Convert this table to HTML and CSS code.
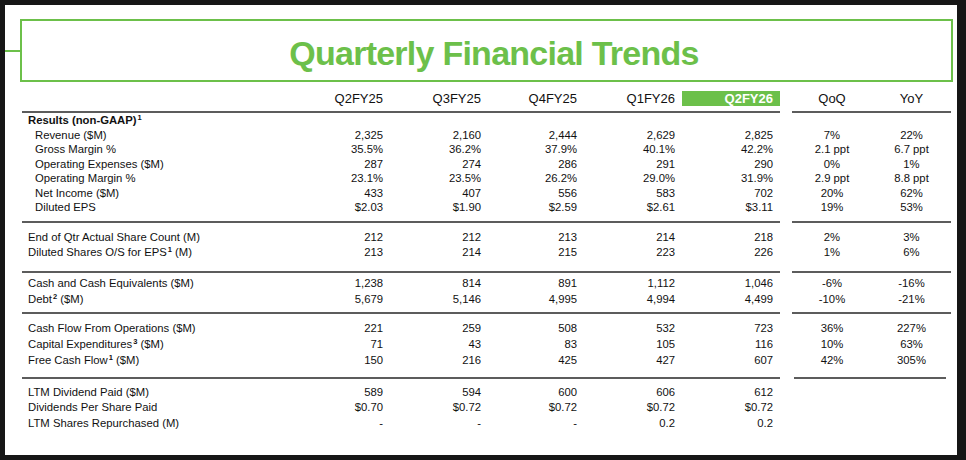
FILE: index.html
```html
<!DOCTYPE html>
<html>
<head>
<meta charset="utf-8">
<link rel="stylesheet" href="styles.css">
</head>
<body>
<div class="panel">
  <div class="title-row">
    <div class="connector"></div>
    <div class="title-box"><h1 class="title">Quarterly Financial Trends</h1></div>
  </div>

  <div class="row head">
    <span></span>
    <span class="num">Q2FY25</span>
    <span class="num">Q3FY25</span>
    <span class="num">Q4FY25</span>
    <span class="num">Q1FY26</span>
    <span class="num hl">Q2FY26</span>
    <span class="chg">QoQ</span>
    <span class="chg">YoY</span>
  </div>
  <div class="rule r-head"><div class="rl"></div><div class="rr"></div></div>

  <div class="sec s1">
    <div class="row"><span class="lbl bold">Results (non-GAAP)<sup>1</sup></span><span></span><span></span><span></span><span></span><span></span><span></span><span></span></div>
    <div class="row"><span class="lbl sub">Revenue ($M)</span><span class="num">2,325</span><span class="num">2,160</span><span class="num">2,444</span><span class="num">2,629</span><span class="num">2,825</span><span class="chg">7%</span><span class="chg">22%</span></div>
    <div class="row"><span class="lbl sub">Gross Margin %</span><span class="num">35.5%</span><span class="num">36.2%</span><span class="num">37.9%</span><span class="num">40.1%</span><span class="num">42.2%</span><span class="chg">2.1 ppt</span><span class="chg">6.7 ppt</span></div>
    <div class="row"><span class="lbl sub">Operating Expenses ($M)</span><span class="num">287</span><span class="num">274</span><span class="num">286</span><span class="num">291</span><span class="num">290</span><span class="chg">0%</span><span class="chg">1%</span></div>
    <div class="row"><span class="lbl sub">Operating Margin %</span><span class="num">23.1%</span><span class="num">23.5%</span><span class="num">26.2%</span><span class="num">29.0%</span><span class="num">31.9%</span><span class="chg">2.9 ppt</span><span class="chg">8.8 ppt</span></div>
    <div class="row"><span class="lbl sub">Net Income ($M)</span><span class="num">433</span><span class="num">407</span><span class="num">556</span><span class="num">583</span><span class="num">702</span><span class="chg">20%</span><span class="chg">62%</span></div>
    <div class="row"><span class="lbl sub">Diluted EPS</span><span class="num">$2.03</span><span class="num">$1.90</span><span class="num">$2.59</span><span class="num">$2.61</span><span class="num">$3.11</span><span class="chg">19%</span><span class="chg">53%</span></div>
  </div>
  <div class="rule r1"><div class="rl"></div><div class="rr"></div></div>

  <div class="sec s2">
    <div class="row"><span class="lbl">End of Qtr Actual Share Count (M)</span><span class="num">212</span><span class="num">212</span><span class="num">213</span><span class="num">214</span><span class="num">218</span><span class="chg">2%</span><span class="chg">3%</span></div>
    <div class="row"><span class="lbl">Diluted Shares O/S for EPS<sup>1</sup> (M)</span><span class="num">213</span><span class="num">214</span><span class="num">215</span><span class="num">223</span><span class="num">226</span><span class="chg">1%</span><span class="chg">6%</span></div>
  </div>
  <div class="rule r2"><div class="rl"></div><div class="rr"></div></div>

  <div class="sec s3">
    <div class="row"><span class="lbl">Cash and Cash Equivalents ($M)</span><span class="num">1,238</span><span class="num">814</span><span class="num">891</span><span class="num">1,112</span><span class="num">1,046</span><span class="chg">-6%</span><span class="chg">-16%</span></div>
    <div class="row"><span class="lbl">Debt<sup>2</sup> ($M)</span><span class="num">5,679</span><span class="num">5,146</span><span class="num">4,995</span><span class="num">4,994</span><span class="num">4,499</span><span class="chg">-10%</span><span class="chg">-21%</span></div>
  </div>
  <div class="rule r3"><div class="rl"></div><div class="rr"></div></div>

  <div class="sec s4">
    <div class="row"><span class="lbl">Cash Flow From Operations ($M)</span><span class="num">221</span><span class="num">259</span><span class="num">508</span><span class="num">532</span><span class="num">723</span><span class="chg">36%</span><span class="chg">227%</span></div>
    <div class="row"><span class="lbl">Capital Expenditures<sup>3</sup> ($M)</span><span class="num">71</span><span class="num">43</span><span class="num">83</span><span class="num">105</span><span class="num">116</span><span class="chg">10%</span><span class="chg">63%</span></div>
    <div class="row"><span class="lbl">Free Cash Flow<sup>1</sup> ($M)</span><span class="num">150</span><span class="num">216</span><span class="num">425</span><span class="num">427</span><span class="num">607</span><span class="chg">42%</span><span class="chg">305%</span></div>
  </div>
  <div class="rule r4"><div class="rl"></div><div class="rr short"></div></div>

  <div class="sec s5">
    <div class="row"><span class="lbl">LTM Dividend Paid ($M)</span><span class="num">589</span><span class="num">594</span><span class="num">600</span><span class="num">606</span><span class="num">612</span><span></span><span></span></div>
    <div class="row"><span class="lbl">Dividends Per Share Paid</span><span class="num">$0.70</span><span class="num">$0.72</span><span class="num">$0.72</span><span class="num">$0.72</span><span class="num">$0.72</span><span></span><span></span></div>
    <div class="row"><span class="lbl">LTM Shares Repurchased (M)</span><span class="num">-</span><span class="num">-</span><span class="num">-</span><span class="num">0.2</span><span class="num">0.2</span><span></span><span></span></div>
  </div>
</div>
</body>
</html>
```

FILE: styles.css
```css
* { box-sizing: border-box; }

html, body {
  margin: 0;
  padding: 0;
}

body {
  background: #161616;
  font-family: "Liberation Sans", Arial, sans-serif;
  color: #111111;
  width: 966px;
  height: 460px;
  overflow: hidden;
}

.panel {
  margin: 5px;
  width: 952px;
  height: 450px;
  background: #ffffff;
  overflow: hidden;
}

/* title */
.title-row {
  display: flex;
  align-items: center;
  margin-top: 14px;
}

.connector {
  width: 15px;
  height: 2px;
  background: #6cc04a;
}

.title-box {
  width: 933px;
  height: 63px;
  border: 2px solid #6cc04a;
  display: flex;
  align-items: center;
  justify-content: center;
  padding: 4px 0 0 15px;
}

.title {
  margin: 0;
  font-size: 34px;
  letter-spacing: -0.75px;
  font-weight: bold;
  color: #6cc04a;
  line-height: 1;
}

/* table rows */
.row,
.rule {
  display: grid;
  grid-template-columns: 268px 100px 98px 96px 98px 98px 92px 79px;
  margin-left: 17px;
}

.row {
  font-size: 11.3px;
  height: 15px;
  line-height: 15px;
  white-space: nowrap;
}

.num {
  text-align: right;
  padding-right: 7px;
}

.chg {
  text-align: center;
}

.chg:nth-child(7) {
  padding-left: 12px;
}

.lbl {
  padding-left: 6px;
}

.lbl.sub {
  padding-left: 13px;
}

.bold {
  font-weight: bold;
}

sup {
  font-size: 7.5px;
  font-weight: bold;
  vertical-align: 4px;
  line-height: 0;
  margin-left: 1px;
}

/* header */
.row.head {
  margin-top: 9px;
  font-size: 13px;
  height: 15px;
  line-height: 15px;
}

.hl {
  background: #6cc04a;
  color: #ffffff;
  font-weight: bold;
}

/* rules */
.rule {
  height: 2px;
}

.rl {
  grid-column: 1 / 7;
  background: #5c5c5c;
}

.rr {
  grid-column: 7 / 9;
  margin-left: 12px;
  background: #5c5c5c;
}

.rr.short {
  margin-left: 14px;
  margin-right: 5px;
}

.r-head { margin-top: 5px; }
.r1 { margin-top: 6px; }
.r2 { margin-top: 11px; }
.r3 { margin-top: 5px; }
.r4 { margin-top: 9px; }

/* sections */
.s1 .row {
  height: 14.5px;
  line-height: 14.5px;
}

.s2 { padding-top: 7px; }
.s3 { padding-top: 2px; }
.s3 .row {
  height: 16px;
  line-height: 16px;
}
.s4 { padding-top: 6px; }
.s4 .row {
  height: 16px;
  line-height: 16px;
}
.s5 { padding-top: 6px; }
.s5 .row {
  height: 15.5px;
  line-height: 15.5px;
}
```
